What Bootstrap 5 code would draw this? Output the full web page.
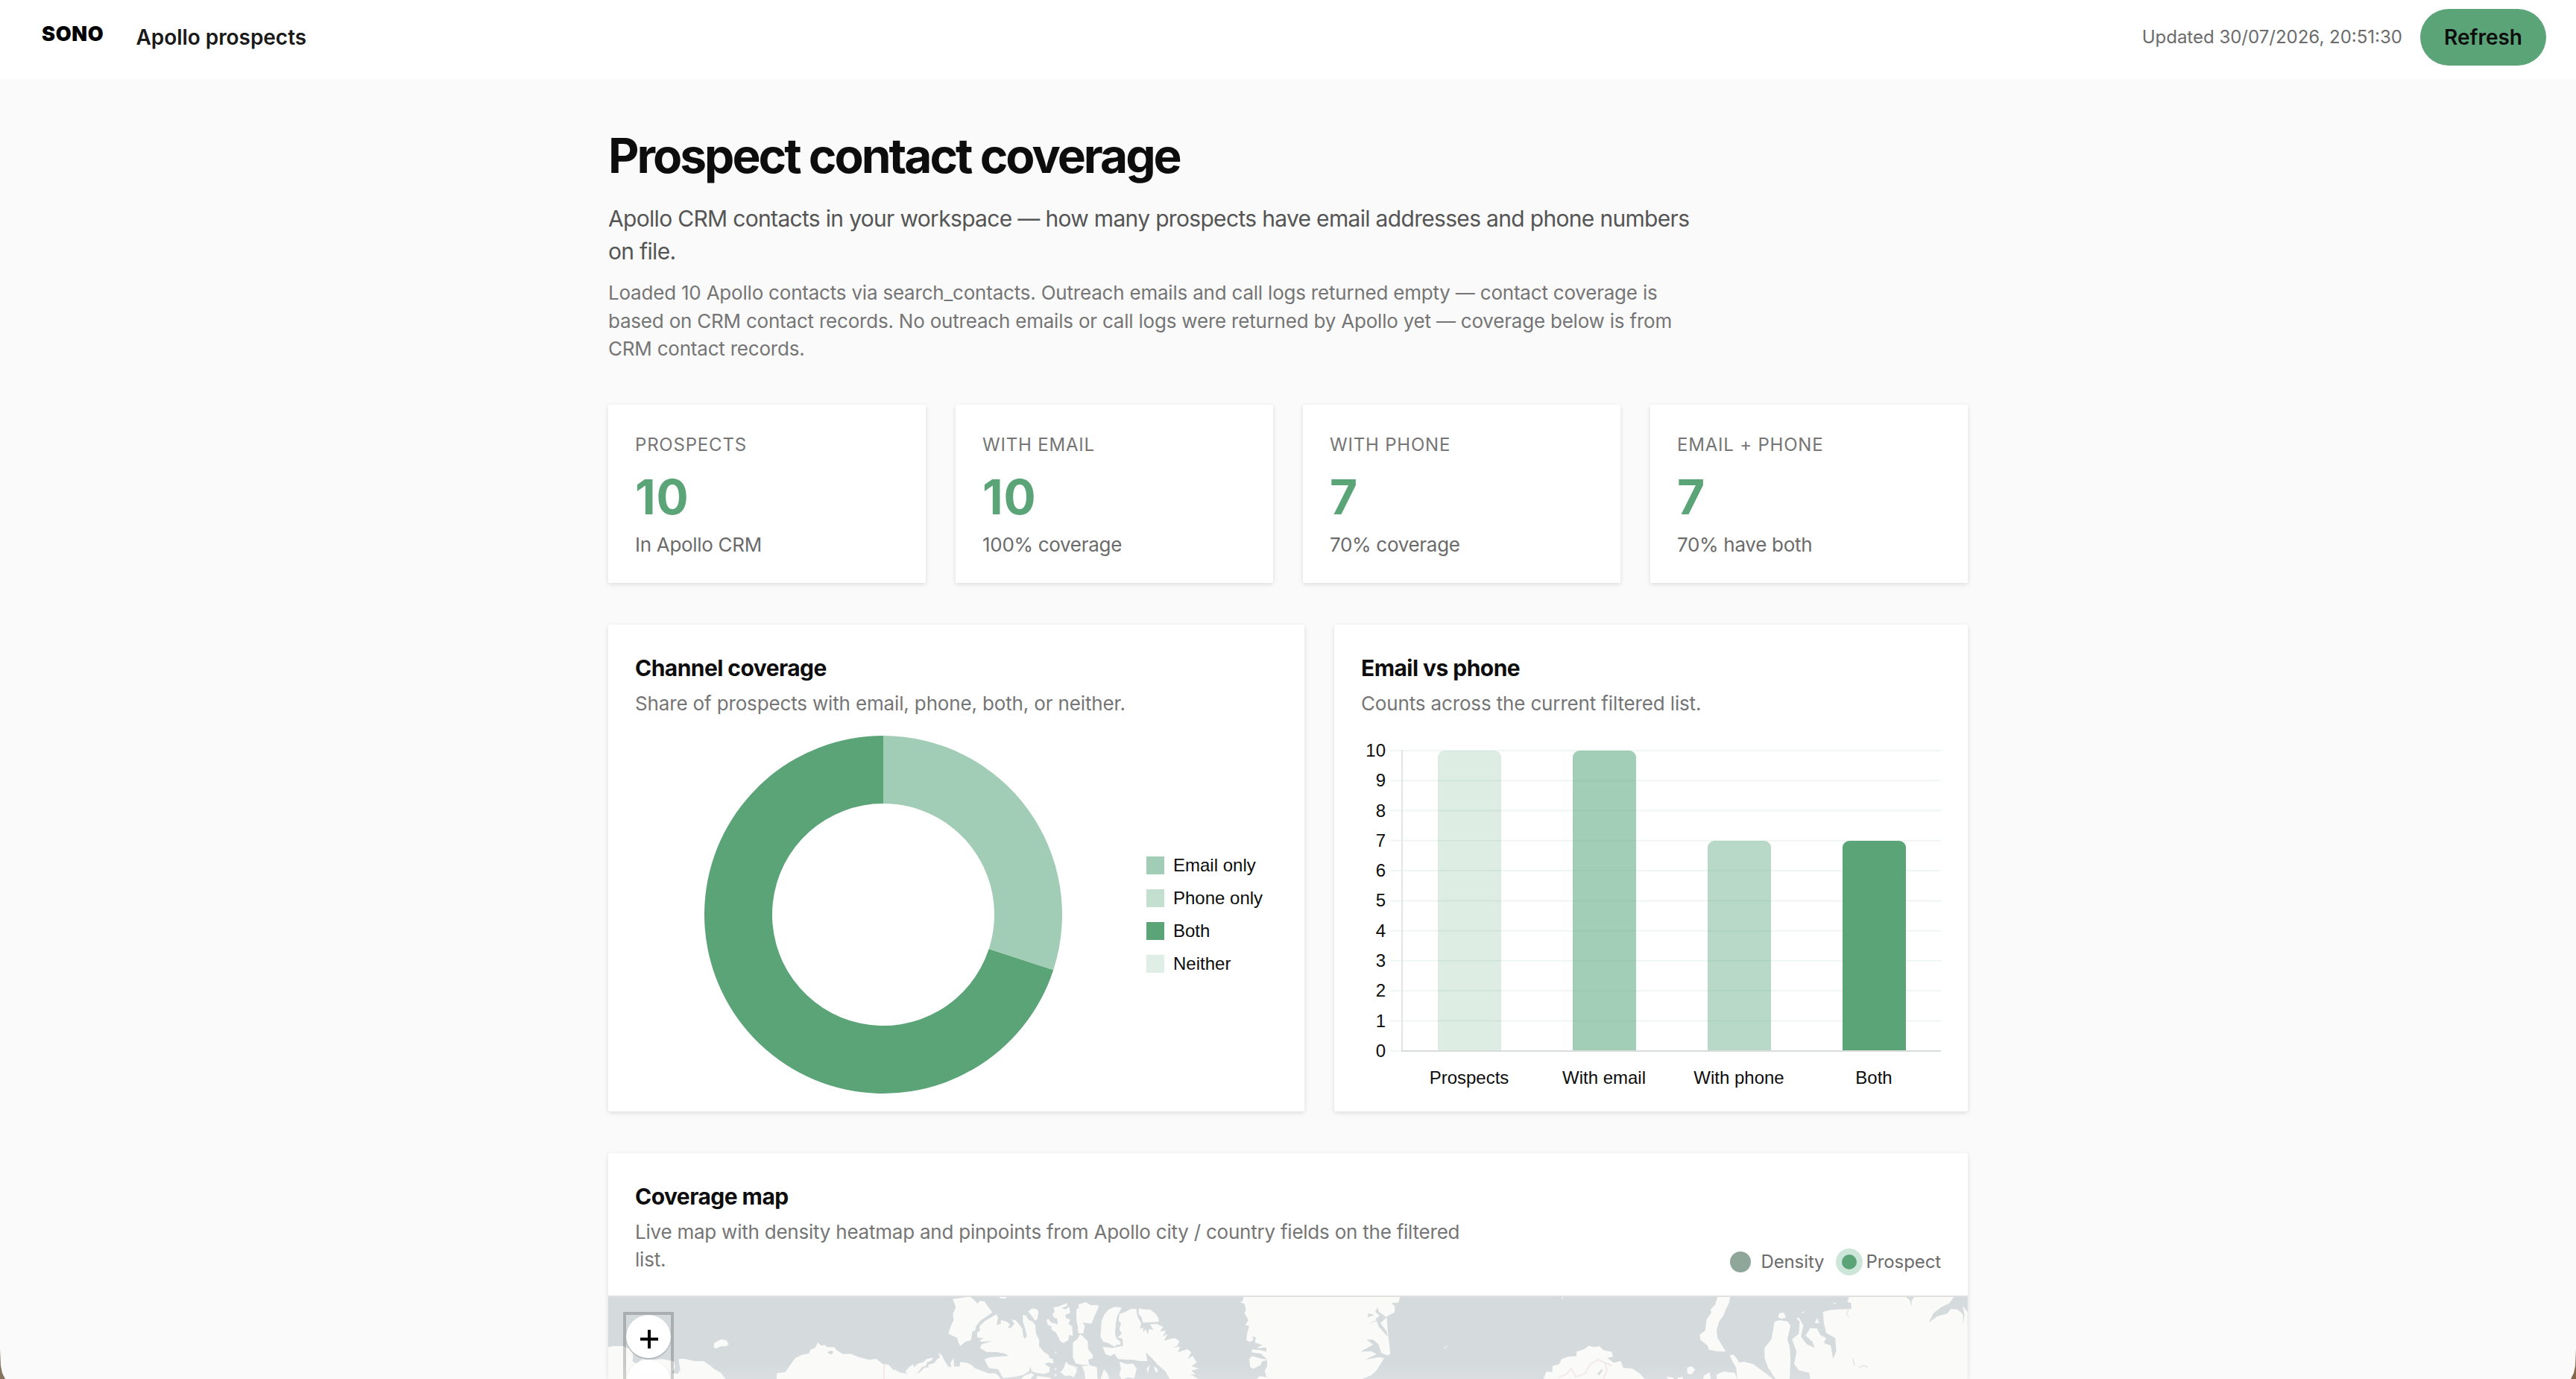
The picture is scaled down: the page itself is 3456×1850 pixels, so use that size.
<!DOCTYPE html>
<html lang="en">
<head>
<meta charset="utf-8">
<title>Apollo prospects</title>
<link href="https://cdn.jsdelivr.net/npm/bootstrap@5.3.0/dist/css/bootstrap.min.css" rel="stylesheet">
<style>
:root{--brand:#5ba478}
html,body{height:1850px;overflow:hidden}
body{background:#fafafa;color:#0d0d0d;font-family:Inter,"Noto Sans",sans-serif;font-size:26px;line-height:1.45;position:relative}
.topbar{height:106px;background:#fff;padding:12px 40px 18px 56px}
.logo{font-weight:900;font-size:27px;letter-spacing:.7px;line-height:1;margin-bottom:9px;color:#000}
.product{font-weight:600;font-size:28px;letter-spacing:-.05px;margin-left:43px;color:#1a1a1a;padding-top:1px}
.stamp{font-size:24px;color:#6b6b6b;padding-top:1px}
.btn-refresh{--bs-btn-bg:var(--brand);--bs-btn-color:#0d0d0d;--bs-btn-border-width:0;height:76px;width:169px;padding:0;font-size:28px;font-weight:600}
.page{width:1824px;padding-top:68px}
.page-title{font-size:64px;line-height:70px;font-weight:700;letter-spacing:-3px;margin-bottom:28px}
.intro{font-size:30px;width:1472px;color:#555;margin-bottom:15px;letter-spacing:-.68px}
.note{width:1440px;color:#757575;margin-bottom:56px;letter-spacing:-.21px}
.panel{background:#fff;border:0;border-radius:2px;box-shadow:0 2px 6px rgba(0,0,0,.12);padding:36px}
.tiles{gap:40px;margin-bottom:56px}
.tile{height:239px}
.tile-label{font-size:24px;letter-spacing:.8px;color:#757575;margin-bottom:17px;padding-top:1px}
.tile-value{font-size:64px;line-height:70px;font-weight:700;color:var(--brand);margin-bottom:10px;letter-spacing:1px}
.tile-sub{color:#6b6b6b;letter-spacing:-.3px}
.charts{gap:40px;margin-bottom:56px}
.chart-panel{height:653px}
.panel-title{font-size:30px;line-height:43.5px;font-weight:700;letter-spacing:-.55px;margin:1px 0 6px}
.panel-sub{color:#757575;letter-spacing:-.15px}
.share-panel{width:934px}
.donut-row{margin:25px 0 0 93px}
.legend-list{font:24px/44px "Liberation Sans",sans-serif;color:#0d0d0d;margin-left:113px}
.swatch{width:24px;height:24px;margin-right:12px}
.bars text{font:24px "Liberation Sans",sans-serif;fill:#0d0d0d}
.map-panel{padding:0;height:303px}
.map-head{height:193px;padding:36px 36px 0;border-bottom:2px solid #e0e0e0}
.map-sub{width:1140px;letter-spacing:-.23px}
.map-legend{font-size:24px;line-height:34px;color:#6b6b6b;margin-bottom:28px;letter-spacing:-.1px}
.dot-density{width:28px;height:28px;background:#8fa79a;margin-right:13px}
.dot-pin{width:20px;height:20px;background:var(--brand);box-shadow:0 0 0 8px #cde6d9;margin:0 13px 0 23px}
.map-box{height:110px;overflow:hidden}
.zoomer{left:20px;top:20px;width:68px;height:90px;overflow:hidden;border:4px solid rgba(0,0,0,.2);border-bottom:0}
.zoom-btn{width:60px;height:58px;border-radius:50%;background:#fff;margin-bottom:2px;box-shadow:0 1px 2px rgba(0,0,0,.3)}
.fade-edge{left:0;right:0;bottom:0;height:22px;background:linear-gradient(rgba(250,250,250,0),rgba(250,250,250,.12))}
.corner{bottom:0}
</style>
</head>
<body>
<header class="topbar d-flex align-items-center">
  <div class="logo">SONO</div>
  <div class="product">Apollo prospects</div>
  <div class="stamp ms-auto me-4">Updated 30/07/2026, 20:51:30</div>
  <button class="btn btn-refresh rounded-pill">Refresh</button>
</header>

<main class="page mx-auto">
  <h1 class="page-title">Prospect contact coverage</h1>
  <p class="intro">Apollo CRM contacts in your workspace — how many prospects have email addresses and phone numbers on file.</p>
  <p class="note">Loaded 10 Apollo contacts via search_contacts. Outreach emails and call logs returned empty — contact coverage is based on CRM contact records. No outreach emails or call logs were returned by Apollo yet — coverage below is from CRM contact records.</p>

  <section class="tiles d-flex">
    <div class="panel tile flex-fill w-25"><div class="tile-label">PROSPECTS</div><div class="tile-value">10</div><div class="tile-sub">In Apollo CRM</div></div>
    <div class="panel tile flex-fill w-25"><div class="tile-label">WITH EMAIL</div><div class="tile-value">10</div><div class="tile-sub">100% coverage</div></div>
    <div class="panel tile flex-fill w-25"><div class="tile-label">WITH PHONE</div><div class="tile-value">7</div><div class="tile-sub">70% coverage</div></div>
    <div class="panel tile flex-fill w-25"><div class="tile-label">EMAIL + PHONE</div><div class="tile-value">7</div><div class="tile-sub">70% have both</div></div>
  </section>

  <section class="charts d-flex">
    <div class="panel chart-panel share-panel">
      <h2 class="panel-title">Channel coverage</h2>
      <div class="panel-sub">Share of prospects with email, phone, both, or neither.</div>
      <div class="donut-row d-flex align-items-center">
        <svg width="480" height="480" viewBox="-240 -240 480 480">
          <path fill="#5ba478" d="M228.25 74.16A240 240 0 1 1 0 -240V-149A149 149 0 1 0 141.7 46.04Z"/>
          <path fill="#a1ccb6" d="M0 -240A240 240 0 0 1 228.25 74.16L141.7 46.04A149 149 0 0 0 0 -149Z"/>
        </svg>
        <div class="legend-list">
          <div class="d-flex align-items-center"><span class="swatch" style="background:#a1ccb6"></span>Email only</div>
          <div class="d-flex align-items-center"><span class="swatch" style="background:#c2dfcf"></span>Phone only</div>
          <div class="d-flex align-items-center"><span class="swatch" style="background:#5ba478"></span>Both</div>
          <div class="d-flex align-items-center"><span class="swatch" style="background:#dfeee6"></span>Neither</div>
        </div>
      </div>
    </div>
    <div class="panel chart-panel flex-fill">
      <h2 class="panel-title">Email vs phone</h2>
      <div class="panel-sub">Counts across the current filtered list.</div>
      <svg class="bars d-block" width="778" height="504" viewBox="0 0 778 504">
        <path stroke="#eff6f3" stroke-width="2" d="M39 45H778M39 85.3H778M39 125.6H778M39 165.8H778M39 206.1H778M39 246.4H778M39 286.7H778M39 327H778M39 367.2H778M39 407.5H778M39 448H54"/>
        <path fill="rgb(91,164,120)" fill-opacity=".2" d="M103 448V54a9 9 0 0 1 9-9h67a9 9 0 0 1 9 9V448Z"/>
        <path fill="rgb(91,167,128)" fill-opacity=".57" d="M284 448V54a9 9 0 0 1 9-9h67a9 9 0 0 1 9 9V448Z"/>
        <path fill="rgb(91,167,128)" fill-opacity=".43" d="M465 448V175a9 9 0 0 1 9-9h67a9 9 0 0 1 9 9V448Z"/>
        <path fill="#5ba478" d="M646 448V175a9 9 0 0 1 9-9h67a9 9 0 0 1 9 9V448Z"/>
        <path stroke="#e3e5e4" stroke-width="2" d="M55 44V448"/>
        <path stroke="#d8dddb" stroke-width="2" d="M54 448H778"/>
        <g text-anchor="end">
          <text x="33" y="53">10</text><text x="33" y="93.3">9</text><text x="33" y="133.6">8</text><text x="33" y="174">7</text><text x="33" y="214">6</text><text x="33" y="254.4">5</text><text x="33" y="295">4</text><text x="33" y="335">3</text><text x="33" y="375.3">2</text><text x="33" y="415.5">1</text><text x="33" y="456">0</text>
        </g>
        <g text-anchor="middle">
          <text x="145" y="492">Prospects</text><text x="326" y="492">With email</text><text x="507" y="492">With phone</text><text x="688" y="492">Both</text>
        </g>
      </svg>
    </div>
  </section>

  <section class="panel map-panel">
    <div class="map-head d-flex justify-content-between align-items-end">
      <div class="align-self-start">
        <h2 class="panel-title">Coverage map</h2>
        <div class="panel-sub map-sub">Live map with density heatmap and pinpoints from Apollo city / country fields on the filtered list.</div>
      </div>
      <div class="map-legend d-flex align-items-center">
        <span class="dot-density rounded-circle"></span>Density
        <span class="dot-pin rounded-circle"></span>Prospect
      </div>
    </div>
    <div class="map-box position-relative">
      <svg class="d-block" width="1824" height="110" viewBox="0 0 1824 110">
        <rect width="1824" height="110" fill="#d5dadd"/>
        <!-- Alaska and the north-western mainland -->
        <g fill="#fafaf8" transform="translate(-16,-210) scale(.58674,.33333)">
          <path d="M20 835L40 827L62 828L75 838L84 858L83 890L92 898L105 880L120 884L150 880L165 884L178 890L180 915L172 935L186 940L192 925L188 880L200 878L225 888L245 888L260 905L270 920L285 935L298 965H20Z"/>
          <path d="M268 832L270 815L285 800L297 804L303 820L297 829L284 829L274 838Z"/>
          <path d="M412 965L413 937L432 932L444 902L455 875L472 862L486 858L490 842L500 835L507 813L514 826L522 823L528 832L544 832L550 845L565 860L582 858L600 872L625 883L640 878L655 900L668 902L680 925L692 936L705 938L712 965Z"/>
        </g>
        <path d="M294 74L299 72L302 73L300 77L296 76Z" fill="#d5dadd"/>
        <!-- Canadian archipelago and western Greenland -->
        <g fill="#fafaf8" transform="translate(384,-4) scale(.33333)">
          <path d="M0 303L20 315L45 320L50 325L45 310L60 293L75 282L78 295L95 280L115 275L130 261L155 256L150 268L130 276L128 288L110 295L90 323L105 312L120 296L138 295L135 285L160 278L172 262L184 255L176 238L190 245L200 265L215 290L228 297L226 275L238 258L240 292L262 292L265 274L290 276L310 285L325 299L350 308L382 320L400 318L415 325L430 345H0Z"/>
          <path d="M235 20L305 10L325 28L334 38L345 27L362 30L394 74L375 88L345 108L328 130L325 148L314 150L308 186L285 192L265 210L258 195L252 176L217 160L228 125L239 105L235 80L247 54Z"/>
          <path d="M421 12H455L445 18H427Z"/>
          <path d="M538 70L555 58L572 60L580 72L576 100L567 108L552 88Z"/>
          <path d="M410 81L417 95L411 125L428 120L428 105L450 110L465 122L456 138L470 135L482 120L473 103L487 105L500 120L515 140L519 172L526 180L533 168L526 140L517 110L517 84L530 88L540 104L555 110L567 125L570 160L583 185L582 210L600 232L622 247L624 258L638 262L640 280L618 275L605 282L625 295L623 316L600 322L575 318L553 311L547 292L541 311L520 325L490 332L437 338L425 318L418 303L380 298L362 263L382 255L425 251L459 250L445 240L415 234L370 233L344 216L352 202L395 190L345 192L347 184L360 178L333 175L333 155L345 146L342 130L365 108L385 97Z"/>
          <path d="M640 54L660 50L695 37L695 48L672 56L690 62L703 50L708 75L688 85L690 97L708 103L700 120L715 130L718 168L703 165L700 185L680 197L668 190L650 155L632 143L632 130L618 125L612 108L617 98L632 115L658 122L655 100L640 92L636 80L645 72Z"/>
          <path d="M732 62L742 56L740 42L770 33L790 45L820 44L821 55L808 83L793 119L757 115L766 128L760 158L740 158L738 130L733 110Z"/>
          <path d="M914 56L905 53L885 52L862 62L845 82L833 110L832 135L829 170L840 192L862 198L887 213L892 205L910 203L910 193L893 178L888 160L891 120L896 90Z"/>
          <path d="M906 80L930 72L950 60L973 60L978 90L993 118L988 140L1000 135L1003 155L1010 140L1020 162L1025 140L1043 145L1028 122L1055 120L1082 133L1068 150L1093 148L1080 172L1100 160L1085 188L1112 180L1130 178L1146 190L1140 208L1120 215L1150 212L1140 235L1160 228L1180 222L1195 235L1180 262L1200 248L1217 275L1195 290L1225 300L1195 308L1213 325L1190 322L1228 345H1110L1090 310L1060 285L1040 262L1012 235L1018 270L990 270L960 265L930 264L900 262L885 240L870 250L850 242L838 213L880 217L920 208L918 180L898 175L915 160L905 140L912 120L902 105Z"/>
          <path d="M984 58L1005 62L1030 63L1050 78L1062 96L1065 112L1030 114L1000 115L994 92L983 80Z"/>
          <path d="M748 161L760 172L778 190L780 222L798 245L798 258L780 265L785 285L760 285L730 280L718 255L718 195L737 180Z"/>
          <path d="M690 272L703 285L725 290L735 310L722 335L705 328L688 330L667 315L682 298Z"/>
          <path d="M755 290L785 286L815 295L817 345H768L765 315Z"/>
          <path d="M843 303L858 320L865 345H830Z"/>
          <path d="M905 272L935 282L960 280L975 300L965 340L940 335L915 345L905 325L912 300Z"/>
          <path d="M520 330L550 318L562 325L545 345H508ZM575 330L620 335L640 345H570Z"/>
          <path d="M1020 318L1015 300L1028 286L1025 300ZM1045 290L1058 300L1060 318L1048 310ZM645 232L653 235L648 240ZM645 297L653 300L648 308ZM645 320L655 325L647 333ZM730 290L738 298L730 304Z"/>
          <path d="M1404 12L1402 28L1390 33L1408 38L1415 62L1409 78L1418 92L1425 105L1412 125L1428 128L1420 155L1416 185L1430 193L1445 185L1440 170L1455 175L1450 195L1480 205L1458 218L1497 215V232L1470 225L1440 223L1437 235L1475 240L1500 263L1475 260L1440 250L1428 260L1432 295L1445 301L1475 285L1478 272L1503 265L1500 290L1490 310L1498 335L1470 330L1455 345H1600V12Z"/>
        </g>
        <!-- Greenland, Scandinavia and the Russian coast -->
        <g fill="#fafaf8" transform="translate(884,-210) scale(.61224,.33333)">
          <path d="M0 630H291L288 652L272 655L280 668L279 692L262 708L265 780L270 858L255 880L240 925L228 945L205 962H0Z"/>
          <path d="M645 628H650L647 638ZM386 838L396 822L392 834Z"/>
          <path d="M987 628H1015L1012 655L1005 680L1000 705L990 730L985 765L987 795L997 825L1005 850L985 848L968 842L965 825L950 803L948 782L960 765L963 720L973 695L972 680L982 660Z"/>
          <path d="M605 962L612 930L625 932L625 908L640 900L645 880L660 870L678 868L678 850L695 840L705 826L715 832L728 828L738 845L755 850L758 870L745 875L760 895L775 888L780 915L800 918L818 940L828 962Z"/>
          <path d="M920 915L930 908L938 922L930 942L921 938ZM958 945L970 932L972 962H955ZM875 950L890 955L892 962H880ZM900 955L910 952L912 962H898ZM985 942L1000 930L1025 935L1030 962H985Z"/>
          <path d="M1014 865L1022 862L1030 880L1034 893L1045 890L1065 900L1080 920L1098 945L1110 962H1030L1028 915L1020 890Z"/>
          <path d="M1090 835L1105 800L1112 730L1122 723L1140 728L1147 745L1140 800L1145 830L1147 880L1145 962H1115L1098 915L1090 875Z"/>
          <path d="M1120 712L1122 695L1132 692L1137 712L1128 718Z"/>
          <path d="M1150 800L1165 778L1167 730L1160 715L1165 712L1175 745L1170 790L1182 820L1200 835L1195 810L1180 785L1190 755L1205 757L1212 782L1225 795L1220 815L1235 825L1240 878L1247 850L1245 795L1225 775L1220 735L1218 690L1235 682L1280 678V655L1272 650L1275 630H1535V962H1190L1188 935L1165 925L1155 900L1160 850Z"/>
          <path d="M1200 735L1205 715L1210 735ZM1172 690L1178 687L1174 696ZM1241 653L1248 655L1243 659Z"/>
        </g>
        <!-- fjords, rivers and inlets cut into the land -->
        <g fill="#d5dadd" transform="translate(884,-210) scale(.61224,.33333)">
          <path d="M262 712L245 690L242 672L237 690L247 705L238 718L245 750L264 790L262 768L248 735ZM220 712L235 702L222 696ZM222 738L240 722L238 728ZM265 866L250 855L244 820L232 802L218 800L232 822L205 850L228 848L240 860L215 882L245 872L262 878Z"/>
          <path d="M1505 630L1495 655L1478 670L1460 695L1450 732L1468 708L1490 697L1498 678L1513 680L1525 700V742L1528 700L1524 665L1535 690V630ZM1400 630H1418L1412 645V670L1408 642Z"/>
          <path d="M723 940L733 920L736 925L728 945Z"/>
        </g>
        <path d="M1664 17L1661 23L1665 27M1670 83L1672 92M1678 95L1684 92L1690 94" fill="none" stroke="#d5dadd"/>
        <g fill="none" stroke="#f3e8ea" stroke-width="2">
          <path d="M370 90V110"/>
          <path d="M1275 108L1285 104L1292 96L1298 107L1310 103L1318 90L1328 84L1337 88L1340 98L1335 110M1337 88L1346 92"/>
        </g>
      </svg>
      <div class="zoomer position-absolute">
        <div class="zoom-btn d-flex align-items-center justify-content-center">
          <svg width="28" height="32" viewBox="0 0 28 32"><path d="M15 7V32M3 19.500H27" stroke="#000" stroke-width="4" fill="none"/></svg>
        </div>
        <div class="zoom-btn"></div>
      </div>
    </div>
  </section>
</main>

<!-- window edge -->
<div class="fade-edge position-absolute"></div>
<svg class="corner position-absolute start-0" width="8" height="42" viewBox="0 0 8 42"><path fill="#85745c" d="M0 2L1 24L3 34L7 42H0Z"/></svg>
<svg class="corner position-absolute end-0" width="8" height="42" viewBox="0 0 8 42"><path fill="#85684c" d="M8 2L7 24L5 34L1 42H8Z"/></svg>
<script src="https://cdn.jsdelivr.net/npm/bootstrap@5.3.0/dist/js/bootstrap.bundle.min.js"></script>
</body>
</html>
